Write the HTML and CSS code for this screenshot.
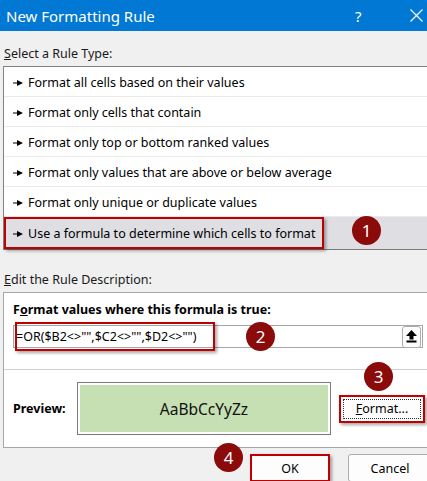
FILE: index.html
```html
<!DOCTYPE html>
<html>
<head>
<meta charset="utf-8">
<link rel="stylesheet" href="styles.css">
</head>
<body>
<div class="dialog">
  <div class="titlebar">
    <span class="title">New Formatting Rule</span>
    <span class="help">?</span>
    <span class="close"><svg width="13" height="13" viewBox="0 0 13 13"><path d="M0.5 0.5 L12.5 12.5 M12.5 0.5 L0.5 12.5" stroke="#fff" stroke-width="1.2" fill="none"/></svg></span>
  </div>
  <div class="content">
    <div class="label label-select"><u>S</u>elect a Rule Type:</div>
    <ul class="rules">
      <li class="rule"><svg class="bullet" width="10" height="6" viewBox="0 0 10 6"><path d="M0 2.5 H5 V3.5 H0 Z M4 0 L10 3 L4 6 Z" fill="#000"/></svg>Format all cells based on their values</li>
      <li class="rule"><svg class="bullet" width="10" height="6" viewBox="0 0 10 6"><path d="M0 2.5 H5 V3.5 H0 Z M4 0 L10 3 L4 6 Z" fill="#000"/></svg>Format only cells that contain</li>
      <li class="rule"><svg class="bullet" width="10" height="6" viewBox="0 0 10 6"><path d="M0 2.5 H5 V3.5 H0 Z M4 0 L10 3 L4 6 Z" fill="#000"/></svg>Format only top or bottom ranked values</li>
      <li class="rule"><svg class="bullet" width="10" height="6" viewBox="0 0 10 6"><path d="M0 2.5 H5 V3.5 H0 Z M4 0 L10 3 L4 6 Z" fill="#000"/></svg>Format only values that are above or below average</li>
      <li class="rule"><svg class="bullet" width="10" height="6" viewBox="0 0 10 6"><path d="M0 2.5 H5 V3.5 H0 Z M4 0 L10 3 L4 6 Z" fill="#000"/></svg>Format only unique or duplicate values</li>
      <li class="rule rule-selected"><svg class="bullet" width="10" height="6" viewBox="0 0 10 6"><path d="M0 2.5 H5 V3.5 H0 Z M4 0 L10 3 L4 6 Z" fill="#000"/></svg>Use a formula to determine which cells to format</li>
    </ul>
    <div class="label label-edit"><u>E</u>dit the Rule Description:</div>
    <div class="group">
      <div class="group-top">
        <div class="heading">F<u>o</u>rmat values where this formula is true:</div>
        <div class="formula">
          <span class="formula-text">=OR($B2&lt;&gt;"",$C2&lt;&gt;"",$D2&lt;&gt;"")</span>
          <span class="collapse"><svg width="11" height="13" viewBox="0 0 11 13"><path d="M5.5 0 L11 6 H7.5 V9.5 H3.5 V6 H0 Z" fill="#000"/><rect x="0.5" y="10.5" width="10" height="2" fill="#000"/></svg></span>
        </div>
      </div>
      <div class="preview-row">
        <span class="preview-label">Preview:</span>
        <div class="preview-box"><div class="preview-fill">AaBbCcYyZz</div></div>
        <span class="btn btn-format marked"><span class="focus"><u>F</u>ormat...</span></span>
      </div>
    </div>
    <div class="footer">
      <span class="btn btn-ok marked">OK</span>
      <span class="btn btn-cancel">Cancel</span>
    </div>
  </div>
  <div class="mark mark-1"></div>
  <div class="mark mark-2"></div>
  <div class="badge badge-1">1</div>
  <div class="badge badge-2">2</div>
  <div class="badge badge-3">3</div>
  <div class="badge badge-4">4</div>
</div>
</body>
</html>
```

FILE: styles.css
```css
html, body {
  margin: 0;
  padding: 0;
  width: 427px;
  height: 481px;
  overflow: hidden;
  background: #f0f0f0;
}
.dialog {
  position: relative;
  width: 427px;
  height: 481px;
  overflow: hidden;
  font-family: "Noto Sans", "Open Sans", sans-serif;
  font-size: 12.5px;
  color: #000;
}
.titlebar {
  height: 31px;
  background: #0078d4;
  color: #fff;
  display: flex;
  align-items: center;
}
.title {
  padding-left: 6px;
  font-size: 15px;
  flex: 1;
}
.help {
  font-size: 15px;
  width: 55px;
  text-align: left;
}
.close {
  width: 17px;
  display: flex;
  align-items: center;
}
.content {
  padding-left: 3px;
  width: 460px;
}
.label {
  height: 18px;
  line-height: 18px;
  padding-left: 1px;
  color: #1a1a1a;
}
.label-select {
  margin-top: 14px;
  margin-bottom: 3px;
}
.label-edit {
  margin-top: 21px;
  margin-bottom: 3px;
}
.rules {
  list-style: none;
  margin: 0;
  padding: 0;
  background: #fff;
  border-top: 1px solid #828282;
  border-left: 1px solid #828282;
  border-bottom: 1px solid #7a7a7a;
}
.rule {
  height: 29px;
  box-sizing: border-box;
  height: 30px;
  padding-top: 2px;
  border-bottom: 1px solid #ebebeb;
  display: flex;
  align-items: center;
  padding-left: 9px;
}
.bullet {
  margin-right: 5px;
  flex: none;
}
.rule-selected {
  height: 32px;
  padding-top: 1px;
  border-bottom: none;
  background: #dedee3;
}
.group {
  background: #fff;
  border: 1px solid #a6a6a6;
}
.group-top {
  padding: 9px 0 21px 9px;
  border-bottom: 1px solid #cfcfcf;
}
.heading {
  font-weight: bold;
  height: 16px;
  line-height: 16px;
  margin-bottom: 7px;
}
.formula {
  width: 406px;
  height: 21px;
  border: 1px solid #a6a6a6;
  display: flex;
  align-items: center;
  justify-content: space-between;
  padding-left: 2px;
  box-sizing: content-box;
}
.formula-text {
  font-size: 12.5px;
}
.collapse {
  width: 17px;
  height: 20px;
  border: 1px solid #adadad;
  border-radius: 3px;
  background: #fdfdfd;
  display: flex;
  align-items: center;
  justify-content: center;
  margin-right: 1px;
}
.preview-row {
  height: 77px;
  display: flex;
  align-items: center;
  padding-left: 9px;
}
.preview-label {
  width: 64px;
  font-weight: bold;
}
.preview-box {
  width: 248px;
  height: 47px;
  border: 1px solid #7a7a7a;
  padding: 2px;
  box-sizing: content-box;
  background: #fff;
  margin-right: 8px;
}
.preview-fill {
  height: 100%;
  background: #c6e0b4;
  display: flex;
  align-items: center;
  justify-content: center;
  font-size: 15.5px;
  color: #111;
}
.btn {
  display: flex;
  align-items: center;
  justify-content: center;
  box-sizing: border-box;
  background: #fdfdfd;
  border: 1px solid #adadad;
  border-radius: 3px;
  font-size: 12.5px;
}
.btn-format {
  width: 86px;
  height: 28px;
  padding: 2px;
}
.focus {
  flex: 1;
  align-self: stretch;
  display: flex;
  align-items: center;
  justify-content: center;
  border: 1px dotted #333;
}
.marked {
  border: 2px solid #c00000;
  border-radius: 0;
  box-shadow: 2px 2px 3px rgba(0,0,0,0.35);
}
.footer {
  display: flex;
  padding-left: 247px;
  margin-top: 6px;
  gap: 18px;
}
.btn-ok {
  width: 80px;
  height: 28px;
}
.btn-cancel {
  width: 84px;
  height: 28px;
}
.mark {
  position: absolute;
  border: 2px solid #c00000;
  box-shadow: 2px 2px 3px rgba(0,0,0,0.35);
}
.mark-1 {
  left: 4px;
  top: 217px;
  width: 316px;
  height: 28px;
}
.mark-2 {
  left: 15px;
  top: 322px;
  width: 196px;
  height: 25px;
}
.badge {
  position: absolute;
  width: 29px;
  height: 29px;
  border-radius: 50%;
  background: #8b0a0a;
  color: #fff;
  font-size: 17px;
  line-height: 29px;
  text-align: center;
}
.badge-1 { left: 352px; top: 216px; }
.badge-2 { left: 246px; top: 322px; }
.badge-3 { left: 364px; top: 362px; }
.badge-4 { left: 214px; top: 443px; }
```
